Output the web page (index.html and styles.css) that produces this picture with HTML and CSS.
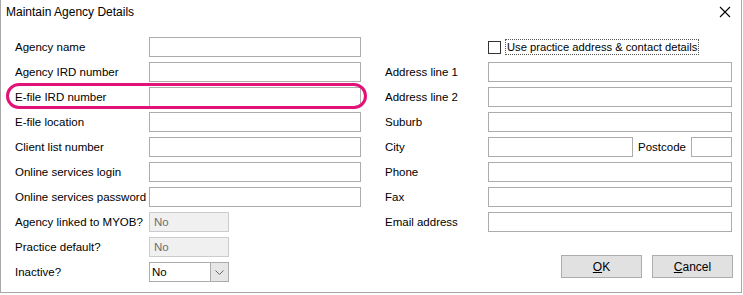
FILE: index.html
```html
<!DOCTYPE html>
<html lang="en">
<head>
  <meta charset="UTF-8" />
  <title>Maintain Agency Details</title>
  <link rel="stylesheet" href="styles.css">
</head>
<body>
  <div class="window">
    <div class="titlebar">
      <span class="title">Maintain Agency Details</span>
      <svg class="close" width="12" height="12" viewBox="0 0 12 12">
        <path d="M1 1 L11 11 M11 1 L1 11" stroke="#000" stroke-width="1.1" fill="none"/>
      </svg>
    </div>

    <div class="form">
      <div class="col left-col">
        <div class="row"><label>Agency name</label><input class="field" type="text"></div>
        <div class="row"><label>Agency IRD number</label><input class="field" type="text"></div>
        <div class="row"><label>E-file IRD number</label><input class="field" type="text"></div>
        <div class="row"><label>E-file location</label><input class="field" type="text"></div>
        <div class="row"><label>Client list number</label><input class="field" type="text"></div>
        <div class="row"><label>Online services login</label><input class="field" type="text"></div>
        <div class="row"><label>Online services password</label><input class="field" type="text"></div>
        <div class="row"><label>Agency linked to MYOB?</label><div class="field small disabled">No</div></div>
        <div class="row"><label>Practice default?</label><div class="field small disabled">No</div></div>
        <div class="row">
          <label>Inactive?</label>
          <div class="field small combo">
            <span class="combo-text">No</span>
            <span class="combo-btn">
              <svg width="9" height="5" viewBox="0 0 9 5"><path d="M0.5 0.5 L4.5 4.5 L8.5 0.5" stroke="#666" fill="none"/></svg>
            </span>
          </div>
        </div>
        <div class="highlight"></div>
      </div>

      <div class="col right-col">
        <div class="row check-row">
          <span class="checkbox"></span>
          <span class="check-label">Use practice address &amp; contact details</span>
        </div>
        <div class="row"><label>Address line 1</label><input class="field wide" type="text"></div>
        <div class="row"><label>Address line 2</label><input class="field wide" type="text"></div>
        <div class="row"><label>Suburb</label><input class="field wide" type="text"></div>
        <div class="row">
          <label>City</label>
          <input class="field city" type="text">
          <span class="postcode-label">Postcode</span>
          <input class="field postcode" type="text">
        </div>
        <div class="row"><label>Phone</label><input class="field wide" type="text"></div>
        <div class="row"><label>Fax</label><input class="field wide" type="text"></div>
        <div class="row"><label>Email address</label><input class="field wide" type="text"></div>
        <div class="buttons">
          <button class="btn"><u>O</u>K</button>
          <button class="btn"><u>C</u>ancel</button>
        </div>
      </div>
    </div>
  </div>
</body>
</html>
```

FILE: styles.css
```css
body {
  margin: 0;
  padding: 0;
  background: #fff;
  font-family: "Liberation Sans", Arial, sans-serif;
  font-size: 11.5px;
  color: #000;
}
.window {
  width: 742px;
  height: 293px;
  box-sizing: border-box;
  border: 1px solid #a8a8a8;
  border-top: none;
  background: #fff;
  position: relative;
}
.titlebar {
  height: 37px;
  display: flex;
  justify-content: space-between;
  padding: 4px 8px 0 5px;
  box-sizing: border-box;
}
.title {
  font-size: 12px;
  line-height: 16px;
}
.close {
  margin-top: 2px;
  margin-right: 2px;
}
.form {
  display: flex;
  padding-left: 14px;
}
.col {
  display: flex;
  flex-direction: column;
  gap: 5px;
}
.left-col {
  width: 370px;
  position: relative;
}
.row {
  display: flex;
  align-items: center;
  height: 20px;
}
.row label {
  flex: none;
}
.left-col label {
  width: 134px;
}
.right-col label {
  width: 103px;
}
.field {
  box-sizing: border-box;
  height: 20px;
  border: 1px solid #acacac;
  background: #fff;
  margin: 0;
  padding: 0 2px;
  font: inherit;
  outline: none;
}
.left-col .field {
  width: 212px;
}
.left-col .field.small {
  width: 80px;
  display: flex;
  align-items: center;
}
.disabled {
  background: #f0f0f0;
  border-color: #cccccc;
  color: #6d6d6d;
  padding-left: 4px;
}
.combo {
  padding: 0 0 0 2px;
  justify-content: space-between;
}
.combo-btn {
  width: 17px;
  height: 18px;
  background: #e6e6e6;
  border-left: 1px solid #acacac;
  display: flex;
  align-items: center;
  justify-content: center;
}
.highlight {
  position: absolute;
  left: -9px;
  top: 46px;
  width: 361px;
  height: 26px;
  box-sizing: border-box;
  border: 3px solid #e3127a;
  border-radius: 13px;
  pointer-events: none;
}
.right-col {
  width: 348px;
}
.check-row {
  padding-left: 103px;
  gap: 4px;
}
.checkbox {
  width: 13px;
  height: 13px;
  box-sizing: border-box;
  border: 1px solid #333;
  background: #fff;
}
.check-label {
  font-size: 11.2px;
  border: 1px dotted #555;
  padding: 0 1px;
  line-height: 14px;
}
.field.wide {
  width: 244px;
}
.field.city {
  width: 145px;
}
.postcode-label {
  margin-left: 5px;
  width: 53px;
}
.field.postcode {
  width: 41px;
}
.buttons {
  display: flex;
  justify-content: flex-end;
  gap: 10px;
  margin-top: 18px;
  padding-right: 0;
}
.btn {
  width: 81px;
  height: 23px;
  background: #e1e1e1;
  border: 1px solid #adadad;
  font: inherit;
  font-size: 12px;
  color: #000;
  padding: 0;
}
```
